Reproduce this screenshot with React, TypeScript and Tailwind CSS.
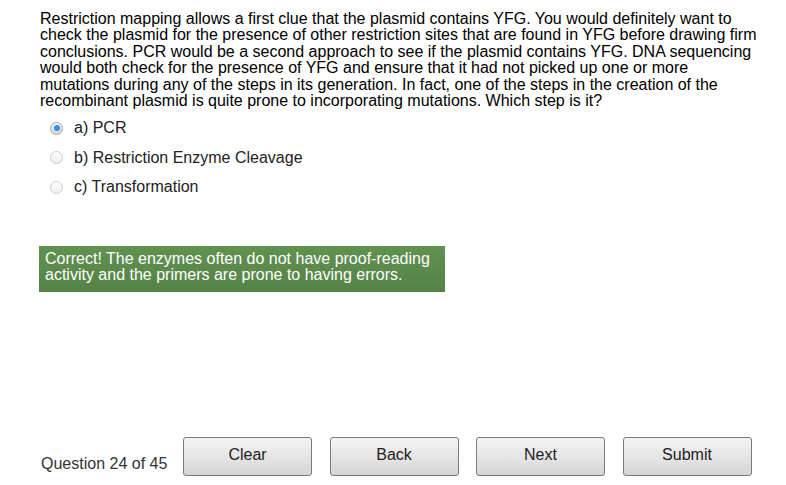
const question =
  'Restriction mapping allows a first clue that the plasmid contains YFG. You would definitely want to check the plasmid for the presence of other restriction sites that are found in YFG before drawing firm conclusions. PCR would be a second approach to see if the plasmid contains YFG. DNA sequencing would both check for the presence of YFG and ensure that it had not picked up one or more mutations during any of the steps in its generation. In fact, one of the steps in the creation of the recombinant plasmid is quite prone to incorporating mutations. Which step is it?'

const options = [
  { label: 'a) PCR', checked: true },
  { label: 'b) Restriction Enzyme Cleavage', checked: false },
  { label: 'c) Transformation', checked: false },
]

const buttons = ['Clear', 'Back', 'Next', 'Submit']

function Radio({ checked }: { checked: boolean }) {
  if (checked) {
    return (
      <span className="flex h-[13px] w-[13px] items-center justify-center rounded-full border border-[#a9a9a9] bg-gradient-to-b from-[#f2f2f2] to-[#d6d6d6]">
        <span className="h-[6px] w-[6px] rounded-full bg-[#3d8ee0]" />
      </span>
    )
  }
  return <span className="block h-[13px] w-[13px] rounded-full border border-[#cdcdcd] bg-gradient-to-b from-[#ffffff] to-[#eeeeee]" />
}

export default function App() {
  return (
    <div className="flex h-[485px] w-[786px] flex-col bg-white font-['Liberation_Sans',Arial,sans-serif] text-[16px]">
      <p className="ml-[40px] mt-[11px] w-[717px] leading-[16.4px] text-black">{question}</p>

      <ul className="ml-[50px] mt-[4px] flex flex-col">
        {options.map((o) => (
          <li key={o.label} className="flex h-[29.5px] items-center gap-[11px] text-[#222]">
            <Radio checked={o.checked} />
            <span>{o.label}</span>
          </li>
        ))}
      </ul>

      <div className="ml-[39px] mt-[44px] h-[46px] w-[406px] bg-gradient-to-b from-[#609250] to-[#568247] px-[6px] pt-[5px] leading-[16px] text-white">
        Correct! The enzymes often do not have proof-reading activity and the primers are prone to having errors.
      </div>

      <div className="mt-auto mb-[9px] flex items-center">
        <span className="ml-[41px] w-[142px] pt-[14px] text-[#333]">Question 24 of 45</span>
        <div className="flex gap-[17.5px]">
          {buttons.map((b) => (
            <button
              key={b}
              type="button"
              className="h-[39px] w-[129px] rounded-[3px] border border-[#7a7a7a] bg-gradient-to-b from-[#f4f4f4] via-[#e6e6e6] to-[#d5d5d5] pb-[4px] text-[#222]"
            >
              {b}
            </button>
          ))}
        </div>
      </div>
    </div>
  )
}
